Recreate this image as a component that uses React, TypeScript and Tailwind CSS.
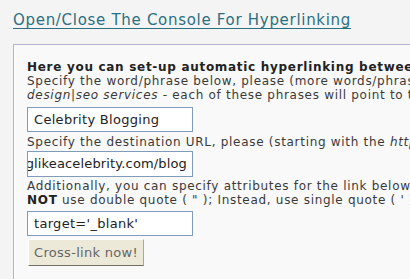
const App = () => {
  return (
    <div className="w-[410px] h-[279px] overflow-hidden bg-[#f4f4f4] font-['DejaVu_Sans',sans-serif]">
      <div className="pl-[13px] pt-[8px]">
        <a
          href="#"
          className="text-[15px] leading-[20px] tracking-[0.7px] text-[#2b6f82] underline underline-offset-[3px]"
        >
          Open/Close The Console For Hyperlinking
        </a>
      </div>

      <div className="mt-[12px] ml-[13px] w-[520px] h-[236px] border border-[#b5b5d2] bg-[#f9f9fa] pl-[13px] pt-[15px]">
        <div className="text-[12px] leading-[14px] tracking-[0.7px] text-[#3a3a3a] whitespace-nowrap">
          <div className="font-bold text-[#222]">Here you can set-up automatic hyperlinking between posts</div>
          <div>Specify the word/phrase below, please (more words/phrases are separated by | like web</div>
          <div>
            <i>design</i>|<i>seo services</i> - each of these phrases will point to the same URL):
          </div>

          <div className="mt-[5px] w-[166px] h-[25px] border border-[#7f9db9] bg-white px-[6px] flex items-center text-[13px] tracking-[0.3px] text-[#222]">
            Celebrity Blogging
          </div>

          <div className="mt-[3px]">
            Specify the destination URL, please (starting with the <i>http://</i>):
          </div>

          <div className="mt-[2px] w-[166px] h-[26px] border border-[#7f9db9] bg-white pr-[5px] flex items-center justify-end overflow-hidden text-[13px] tracking-[0.15px] text-[#222]">
            <span className="shrink-0">http://www.bloglikeacelebrity.com/blog</span>
          </div>

          <div className="mt-[2px]">
            Additionally, you can specify attributes for the link below (optional). Please do
          </div>
          <div>
            <b className="text-[#222]">NOT</b> use double quote ( " ); Instead, use single quote ( ' )
          </div>

          <div className="mt-[4px] w-[166px] h-[25px] border border-[#7f9db9] bg-white px-[6px] flex items-center text-[13px] tracking-[0.3px] text-[#222]">
            target='_blank'
          </div>

          <button className="mt-[3px] ml-[1px] h-[27px] w-[116px] bg-[#ece9d8] border border-t-[#fff] border-l-[#fff] border-b-[#716f64] border-r-[#aca899] text-[13px] tracking-[0.3px] text-[#666]">
            Cross-link now!
          </button>
        </div>
      </div>
    </div>
  );
};

export default App;
